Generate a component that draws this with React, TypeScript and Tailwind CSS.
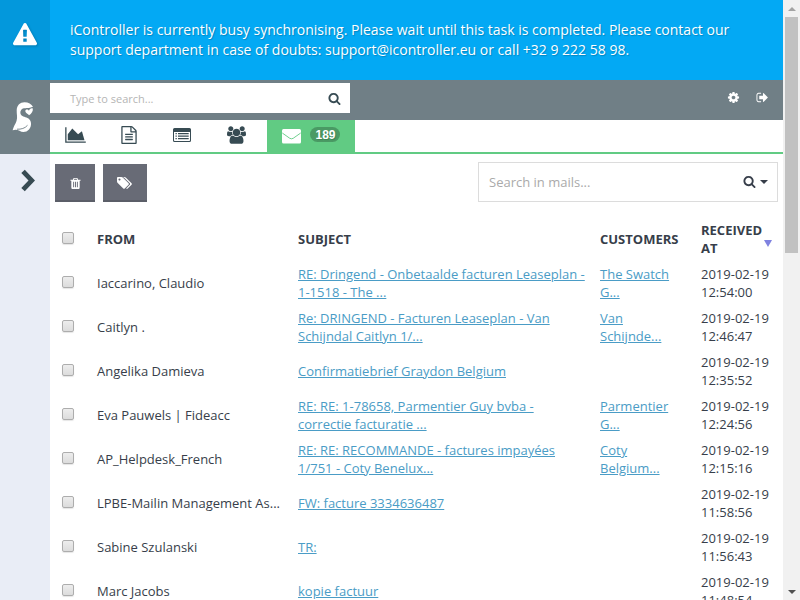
import React from "react";

const ICONS = {
  area: "M2048 1536v128h-2048v-1536h128v1408h1920zm-384-1024l256 896h-1664v-576l448-576 576 576z",
  file: "M1596 380q28 28 48 76t20 88v1152q0 40-28 68t-68 28h-1344q-40 0-68-28t-28-68v-1600q0-40 28-68t68-28h896q40 0 88 20t76 48zm-444-244v376h376q-10-29-22-41l-313-313q-12-12-41-22zm384 1528v-1024h-416q-40 0-68-28t-28-68v-416h-768v1536h1280zm-1024-864q0-14 9-23t23-9h704q14 0 23 9t9 23v64q0 14-9 23t-23 9h-704q-14 0-23-9t-9-23v-64zm736 224q14 0 23 9t9 23v64q0 14-9 23t-23 9h-704q-14 0-23-9t-9-23v-64q0-14 9-23t23-9h704zm0 256q14 0 23 9t9 23v64q0 14-9 23t-23 9h-704q-14 0-23-9t-9-23v-64q0-14 9-23t23-9h704z",
  users: "M593 896q-162 5-265 128h-134q-82 0-138-40.500t-56-118.500q0-353 124-353 6 0 43.500 21t97.500 42.500 119 21.500q67 0 133-23-5 37-5 66 0 139 81 256zm1071 637q0 120-73 189.500t-194 69.500h-874q-121 0-194-69.500t-73-189.500q0-53 3.500-103.500t14-109 26.500-108.500 43-97.500 62-81 85.500-53.500 111.500-20q10 0 43 21.500t73 48 107 48 135 21.500 135-21.500 107-48 73-48 43-21.500q61 0 111.500 20t85.500 53.500 62 81 43 97.500 26.500 108.500 14 109 3.500 103.500zm-1024-1277q0 106-75 181t-181 75-181-75-75-181 75-181 181-75 181 75 75 181zm704 384q0 159-112.500 271.500t-271.500 112.500-271.500-112.500-112.500-271.500 112.500-271.500 271.500-112.500 271.500 112.500 112.500 271.500zm576 225q0 78-56 118.500t-138 40.500h-134q-103-123-265-128 81-117 81-256 0-29-5-66 66 23 133 23 59 0 119-21.500t97.500-42.500 43.500-21q124 0 124 353zm-128-609q0 106-75 181t-181 75-181-75-75-181 75-181 181-75 181 75 75 181z",
  cog: "M1152 896q0-106-75-181t-181-75-181 75-75 181 75 181 181 75 181-75 75-181zm512-109v222q0 12-8 23t-20 13l-185 28q-19 54-39 91 35 50 107 138 10 12 10 25t-9 23q-27 37-99 108t-94 71q-12 0-26-9l-138-108q-44 23-91 38-16 136-29 186-7 28-36 28h-222q-14 0-24.500-8.500t-11.500-21.500l-28-184q-49-16-90-37l-141 107q-10 9-25 9-14 0-25-11-126-114-165-168-7-10-7-23 0-12 8-23 15-21 51-66.500t54-70.500q-27-50-41-99l-183-27q-13-2-21-12.500t-8-23.500v-222q0-12 8-23t19-13l186-28q14-46 39-92-40-57-107-138-10-12-10-24 0-10 9-23 26-36 98.500-107.500t94.500-71.500q13 0 26 10l138 107q44-23 91-38 16-136 29-186 7-28 36-28h222q14 0 24.500 8.500t11.500 21.500l28 184q49 16 90 37l142-107q9-9 24-9 13 0 25 10 129 119 165 170 7 8 7 22 0 12-8 23-15 21-51 66.500t-54 70.500q26 50 41 98l183 28q13 2 21 12.500t8 23.500z",
  signOut: "M704 1440q0 4 1 20t.5 26.500-3 23.500-10 19.500-20.500 6.500h-320q-119 0-203.500-84.500t-84.500-203.500v-704q0-119 84.500-203.500t203.500-84.500h320q13 0 22.500 9.500t9.500 22.500q0 4 1 20t.5 26.500-3 23.500-10 19.500-20.500 6.500h-320q-66 0-113 47t-47 113v704q0 66 47 113t113 47h312l11.500 1 11.500 3 8 5.500 7 9 2 13.500zm928-544q0 26-19 45l-544 544q-19 19-45 19t-45-19-19-45v-288h-448q-26 0-45-19t-19-45v-384q0-26 19-45t45-19h448v-288q0-26 19-45t45-19 45 19l544 544q19 19 19 45z",
  search: "M1216 832q0-185-131.500-316.500t-316.500-131.500-316.500 131.500-131.500 316.500 131.500 316.500 316.500 131.500 316.500-131.500 131.500-316.500zm512 832q0 52-38 90t-90 38q-54 0-90-38l-343-342q-179 124-399 124-143 0-273.500-55.500t-225-150-150-225-55.500-273.500 55.500-273.500 150-225 225-150 273.500-55.500 273.500 55.500 225 150 150 225 55.500 273.500q0 220-124 399l343 343q37 37 37 90z",
  warning: "M1024 1375v-190q0-14-9.500-23.500t-22.500-9.500h-192q-13 0-22.500 9.500t-9.500 23.500v190q0 14 9.500 23.500t22.500 9.500h192q13 0 22.500-9.500t9.500-23.500zm-2-374l18-459q0-12-10-19-13-11-24-11h-220q-11 0-24 11-10 7-10 21l17 457q0 10 10 16.500t24 6.500h185q14 0 23.500-6.500t10.500-16.500zm-14-934l768 1408q35 63-2 126-17 29-46.500 46t-63.500 17h-1536q-34 0-63.500-17t-46.500-46q-37-63-2-126l768-1408q17-31 47-49t65-18 65 18 47 49z",
  trash: "M704 1376v-704q0-14-9-23t-23-9h-64q-14 0-23 9t-9 23v704q0 14 9 23t23 9h64q14 0 23-9t9-23zm256 0v-704q0-14-9-23t-23-9h-64q-14 0-23 9t-9 23v704q0 14 9 23t23 9h64q14 0 23-9t9-23zm256 0v-704q0-14-9-23t-23-9h-64q-14 0-23 9t-9 23v704q0 14 9 23t23 9h64q14 0 23-9t9-23zm-544-992h448l-48-117q-7-9-17-11h-317q-10 2-17 11zm928 32v64q0 14-9 23t-23 9h-96v948q0 83-47 143.500t-113 60.500h-832q-66 0-113-58.500t-47-141.500v-952h-96q-14 0-23-9t-9-23v-64q0-14 9-23t23-9h309l70-167q15-37 54-63t79-26h320q40 0 79 26t54 63l70 167h309q14 0 23 9t9 23z",
  tags: "M576 448q0-53-37.500-90.500t-90.500-37.500-90.500 37.500-37.500 90.500 37.500 90.500 90.500 37.500 90.500-37.500 37.500-90.500zm1067 576q0 53-37 90l-491 492q-39 37-91 37-53 0-90-37l-715-716q-38-37-64.500-101t-26.500-117v-416q0-52 38-90t90-38h416q53 0 117 26.500t102 64.500l715 714q37 39 37 91zm384 0q0 53-37 90l-491 492q-39 37-91 37-36 0-59-14t-53-45l470-470q37-37 37-90 0-52-37-91l-715-714q-38-38-102-64.500t-117-26.500h224q53 0 117 26.500t102 64.500l715 714q37 39 37 91z",
};

type IconProps = { name: keyof typeof ICONS; box?: string; className?: string };

function Icon({ name, box = "0 0 1792 1792", className = "" }: IconProps) {
  return (
    <svg viewBox={box} fill="currentColor" className={"block shrink-0 " + className}>
      <path d={ICONS[name]} />
    </svg>
  );
}

type Mail = { from: string; subject: string[]; customer: string[]; date: string; time: string };

const MAILS: Mail[] = [
  { from: "Iaccarino, Claudio", subject: ["RE: Dringend - Onbetaalde facturen Leaseplan -", "1-1518 - The ..."], customer: ["The Swatch", "G..."], date: "2019-02-19", time: "12:54:00" },
  { from: "Caitlyn .", subject: ["Re: DRINGEND - Facturen Leaseplan - Van", "Schijndal Caitlyn 1/..."], customer: ["Van", "Schijnde..."], date: "2019-02-19", time: "12:46:47" },
  { from: "Angelika Damieva", subject: ["Confirmatiebrief Graydon Belgium"], customer: [], date: "2019-02-19", time: "12:35:52" },
  { from: "Eva Pauwels | Fideacc", subject: ["RE: RE: 1-78658, Parmentier Guy bvba -", "correctie facturatie ..."], customer: ["Parmentier", "G..."], date: "2019-02-19", time: "12:24:56" },
  { from: "AP_Helpdesk_French", subject: ["RE: RE: RECOMMANDE - factures impayées", "1/751 - Coty Benelux..."], customer: ["Coty", "Belgium..."], date: "2019-02-19", time: "12:15:16" },
  { from: "LPBE-Mailin Management As...", subject: ["FW: facture 3334636487"], customer: [], date: "2019-02-19", time: "11:58:56" },
  { from: "Sabine Szulanski", subject: ["TR:"], customer: [], date: "2019-02-19", time: "11:56:43" },
  { from: "Marc Jacobs", subject: ["kopie factuur"], customer: [], date: "2019-02-19", time: "11:48:54" },
];

function Checkbox() {
  return (
    <span className="mb-[3px] block h-3 w-3 rounded-[2px] border border-[#adadad] bg-linear-to-b from-[#ededed] to-[#dcdcdc] shadow-[0_1px_1px_rgba(0,0,0,0.1)]" />
  );
}

function Lines({ lines }: { lines: string[] }) {
  return (
    <a className="text-[#4a9cc6] underline">
      {lines.map((line, i) => (
        <React.Fragment key={line}>
          {i > 0 && <br />}
          {line}
        </React.Fragment>
      ))}
    </a>
  );
}

function Banner() {
  return (
    <div className="flex h-20 shrink-0 bg-[#03a9f4] text-white">
      <div className="flex w-[50px] items-center justify-center bg-[#0398dc] pb-2.5">
        <Icon name="warning" className="h-6 w-6 drop-shadow-[1px_1px_1px_rgba(0,0,0,0.2)]" />
      </div>
      <p className="pt-5 pl-5 text-[14px] leading-5 whitespace-nowrap [text-shadow:1px_1px_1px_rgba(0,0,0,0.2)]">
        iController is currently busy synchronising. Please wait until this task is completed. Please contact our
        <br />
        support department in case of doubts: support@icontroller.eu or call +32 9 222 58 98.
      </p>
    </div>
  );
}

function Sidebar() {
  return (
    <div className="flex w-[50px] shrink-0 flex-col bg-[#e9edf6]">
      <div className="flex h-[74px] bg-[#707f86] pt-[21px] pl-3">
        <svg viewBox="-1 0 24 34" className="h-[34px] w-6">
          <path
            fill="#fff"
            d="M11.500 1.200C7 1.200 4 4 3.700 9C3.500 13 4.800 16.500 3.500 20C2.500 23 .5 25.500 -.4 29.300C2 28.300 4.500 28.600 6.500 29.800C9.500 31.800 13.500 31.300 16 28.500C19.300 24.500 18.300 19.500 15.500 17.500C13 15.800 9.500 16.200 8 13.800C6.500 11 8 7.800 11 7.300C13 7 15.500 7.600 20 5.800C18.500 3 15.500 1.200 11.500 1.200Z"
          />
          <path fill="#fff" d="M16 14.300C15.200 12.800 12.600 12 12.300 10.200C12.200 8.300 14.800 7.800 16 9.800C16.300 7.800 18.500 6.500 19.800 7.500C20.300 10 18.500 12.800 16 14.300Z" />
          <path fill="none" stroke="#707f86" strokeWidth="0.9" d="M4 28.200C8 28.400 12 27.400 14.500 24.300" />
        </svg>
      </div>
      <div className="flex pt-[15px] pl-[21px]">
        <svg viewBox="0 0 14 23" className="h-[23px] w-3.5">
          <path fill="#374b53" d="M0.300 4L3.800 0.800L14 11.500L3.800 22.200L0.300 19L7.500 11.500Z" />
        </svg>
      </div>
    </div>
  );
}

function SearchBar() {
  return (
    <div className="flex h-10 justify-between bg-[#707f86] pt-[3px]">
      <div className="flex h-[30px] w-[300px] items-center justify-between bg-white pr-[9px] pl-5">
        <span className="pt-[2px] text-[11px] text-[#b5b5b5]">Type to search...</span>
        <Icon name="search" className="mt-[1px] h-[13px] w-[13px] text-[#374b53]" />
      </div>
      <div className="flex gap-4 pt-2 pr-3.5 text-white">
        <Icon name="cog" className="h-[13px] w-[13px]" />
        <Icon name="signOut" className="h-[13px] w-[13px]" />
      </div>
    </div>
  );
}

function Tabs() {
  return (
    <div className="flex h-[34px] border-b-2 border-[#61cb83] text-[#374b53]">
      <div className="w-[54px] pt-[6px] pl-[15px]">
        <Icon name="area" box="0 0 2048 1792" className="h-[18px] w-[21px]" />
      </div>
      <div className="w-[54px] pt-1.5 pl-[16px]">
        <Icon name="file" className="h-[18px] w-[18px]" />
      </div>
      <div className="w-[54px] pt-2 pl-[15px]">
        <svg viewBox="0 0 18 14" className="h-3.5 w-[18px]">
          <path fill="currentColor" fillRule="evenodd" d="M1.500 0H16.500Q18 0 18 1.500V12.500Q18 14 16.500 14H1.500Q0 14 0 12.500V1.500Q0 0 1.500 0ZM1 4V12.300Q1 13 1.700 13H16.300Q17 13 17 12.300V4Z" />
          <path fill="currentColor" d="M2.500 5h1.300v1.300H2.500zM2.500 7.500h1.300v1.300H2.500zM2.500 10h1.300v1.300H2.500zM5 5h10.700v1.300H5zM5 7.500h10.700v1.300H5zM5 10h10.700v1.300H5z" />
        </svg>
      </div>
      <div className="w-[55px] pt-1.5 pl-[15px]">
        <Icon name="users" box="0 0 1920 1792" className="h-[18px] w-[19px]" />
      </div>
      <div className="flex h-8 w-[88px] bg-[#61cb83] pl-[15px]">
        <svg viewBox="0 0 20 16" className="mt-2 h-4 w-5">
          <path fill="#fff" d="M1.500 1H17.500Q19 1 19 2.500V14Q19 15.500 17.500 15.500H1.500Q0 15.500 0 14V2.500Q0 1 1.500 1Z" />
          <path fill="none" stroke="#61cb83" strokeWidth="0.9" d="M0.300 5L7.800 10.300Q9.500 11.300 11.200 10.300L18.700 5" />
        </svg>
        <span className="mt-[7px] ml-2 flex h-[15px] w-[30px] items-center justify-center rounded-full bg-[#4a9a64] pl-[1px] font-['Liberation_Sans',sans-serif] text-[12px] font-bold text-white [text-shadow:1px_1px_1px_rgba(0,0,0,0.15)]">
          189
        </span>
      </div>
    </div>
  );
}

function Toolbar() {
  return (
    <div className="flex h-[63px] items-start justify-between pt-2 pr-[5px] pl-[5px]">
      <div className="flex gap-2 pt-[2px] text-white">
        <div className="flex h-[38px] w-10 items-center justify-center border-b-2 border-[#5b5e68] bg-[#686b76] pt-[3px]">
          <Icon name="trash" className="h-[13px] w-[13px]" />
        </div>
        <div className="flex h-[38px] w-11 items-center justify-center border-b-2 border-[#5b5e68] bg-[#686b76] pr-[2px] pt-[1px]">
          <Icon name="tags" box="0 0 2048 1792" className="h-[14px] w-4" />
        </div>
      </div>
      <div className="flex h-10 w-[300px] items-center justify-between border border-[#dcdcdc] bg-white pr-[9px] pl-2.5">
        <span className="pt-[1px] text-[13px] text-[#aaaaaa]">Search in mails...</span>
        <div className="flex items-center gap-1 pb-[1px] text-[#373e4a]">
          <Icon name="search" className="h-[13px] w-[13px]" />
          <span className="h-0 w-0 border-x-4 border-t-4 border-x-transparent border-t-[#373e4a]" />
        </div>
      </div>
    </div>
  );
}

function MailTable() {
  return (
    <div className="text-[13px] leading-[18px] text-[#373e4a]">
      <div className="grid h-11 grid-cols-[47px_201px_302px_101px_80px] items-center font-bold whitespace-nowrap">
        <div className="pl-3"><Checkbox /></div>
        <div>FROM</div>
        <div>SUBJECT</div>
        <div>CUSTOMERS</div>
        <div className="flex">
          <span className="w-[63px]">RECEIVED<br />AT</span>
          <span className="mt-[19px] h-0 w-0 border-x-[4.500px] border-t-7 border-x-transparent border-t-[#7f82e0]" />
        </div>
      </div>
      {MAILS.map((m) => (
        <div key={m.time} className="grid h-11 grid-cols-[47px_201px_302px_101px_80px] items-center whitespace-nowrap">
          <div className="pl-3"><Checkbox /></div>
          <div>{m.from}</div>
          <div><Lines lines={m.subject} /></div>
          <div><Lines lines={m.customer} /></div>
          <div>{m.date}<br />{m.time}</div>
        </div>
      ))}
    </div>
  );
}

function Scrollbar() {
  return (
    <div className="flex h-full w-[17px] flex-col items-center bg-[#f1f1f1]">
      <div className="flex h-[17px] items-center pt-[1px]">
        <span className="h-0 w-0 border-x-4 border-b-4 border-x-transparent border-b-[#a3a3a3]" />
      </div>
      <div className="h-[236px] w-[13px] bg-[#c1c1c1]" />
      <div className="mt-auto flex h-[17px] items-center">
        <span className="h-0 w-0 border-x-4 border-t-4 border-x-transparent border-t-[#505050]" />
      </div>
    </div>
  );
}

export default function App() {
  return (
    <div className="flex h-[600px] w-[800px] overflow-hidden bg-white font-['Open_Sans',sans-serif]">
      <div className="flex h-full w-[783px] flex-col overflow-hidden">
        <Banner />
        <div className="flex min-h-0 flex-1">
          <Sidebar />
          <div className="h-full w-[733px] overflow-hidden">
            <SearchBar />
            <Tabs />
            <Toolbar />
            <MailTable />
          </div>
        </div>
      </div>
      <Scrollbar />
    </div>
  );
}
